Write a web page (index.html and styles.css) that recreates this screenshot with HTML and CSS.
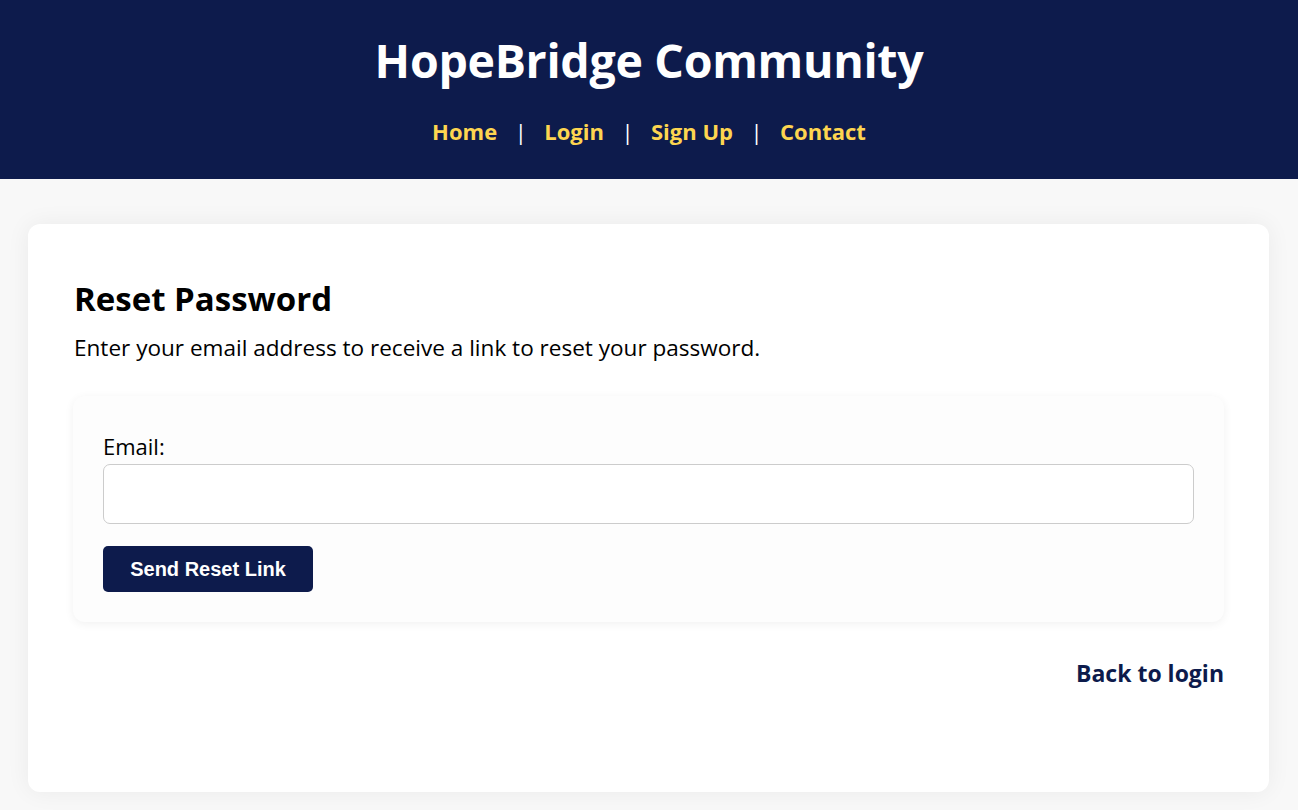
FILE: index.html
```html
<!DOCTYPE html>
<html lang="en">
<head>
<meta charset="utf-8">
<title>Reset Password - HopeBridge Community</title>
<link rel="stylesheet" href="styles.css">
</head>
<body>
<header class="site-header">
  <h1 class="site-title">HopeBridge Community</h1>
  <nav class="site-nav">
    <a href="#">Home</a><span class="sep">|</span><a href="#">Login</a><span class="sep">|</span><a href="#">Sign Up</a><span class="sep">|</span><a href="#">Contact</a>
  </nav>
</header>
<main class="page">
  <section class="card">
    <h2 class="card-title">Reset Password</h2>
    <p class="card-intro">Enter your email address to receive a link to reset your password.</p>
    <form class="reset-form">
      <label class="field-label" for="email">Email:</label>
      <input class="field-input" id="email" type="email">
      <button class="btn" type="button">Send Reset Link</button>
    </form>
    <div class="back-row"><a class="back-link" href="#">Back to login</a></div>
  </section>
</main>
</body>
</html>
```
FILE: styles.css
```css
* { box-sizing: border-box; }
html, body { margin: 0; padding: 0; }
body {
  background: #f8f8f8;
  font-family: "Open Sans", "Noto Sans", sans-serif;
  color: #000;
}
.site-header {
  background: #0d1b4c;
  color: #fff;
  text-align: center;
  padding: 30px 20px 32px;
}
.site-title {
  margin: 0;
  font-size: 46.5px;
  line-height: 60px;
  font-weight: 700;
  letter-spacing: -0.3px;
}
.site-nav {
  margin-top: 26px;
  margin-bottom: 1px;
  font-size: 22px;
  line-height: 30px;
  font-weight: 700;
}
.site-nav a {
  color: #fdd550;
  text-decoration: none;
}
.site-nav .sep {
  color: #fff;
  font-weight: 400;
  margin: 0 17.5px;
}
.page {
  padding: 45px 29px 40px 28px;
}
.card {
  background: #fff;
  border-radius: 12px;
  box-shadow: 0 0 24px rgba(0,0,0,0.06);
  padding: 55px 45px 103px;
}
.card-title {
  margin: 0;
  font-size: 33px;
  line-height: 40px;
  font-weight: 700;
  padding-left: 1px;
}
.card-intro {
  margin: 15px 0 0;
  font-size: 22.55px;
  line-height: 28px;
  padding-left: 1px;
}
.reset-form {
  margin-top: 34px;
  background: #fdfdfd;
  border-radius: 12px;
  box-shadow: 0 2px 10px rgba(0,0,0,0.06);
  padding: 36px 30px 30px;
  display: flex;
  flex-direction: column;
  align-items: flex-start;
}
.field-label {
  font-size: 22px;
  line-height: 28px;
}
.field-input {
  margin-top: 4px;
  width: 100%;
  height: 60px;
  border: 1px solid #cccccc;
  border-radius: 7px;
  background: #fff;
  font-size: 18px;
  padding: 0 12px;
}
.btn {
  margin-top: 22px;
  width: 210px;
  height: 46px;
  border: none;
  border-radius: 5px;
  background: #0d1b4c;
  color: #fff;
  font-family: "Liberation Sans", Arial, sans-serif;
  font-weight: 700;
  font-size: 20px;
}
.back-row {
  margin-top: 36px;
  margin-bottom: 1px;
  display: flex;
  justify-content: flex-end;
}
.back-link {
  color: #0d1b4c;
  font-weight: 700;
  font-size: 23px;
  line-height: 30px;
  text-decoration: none;
}
```
